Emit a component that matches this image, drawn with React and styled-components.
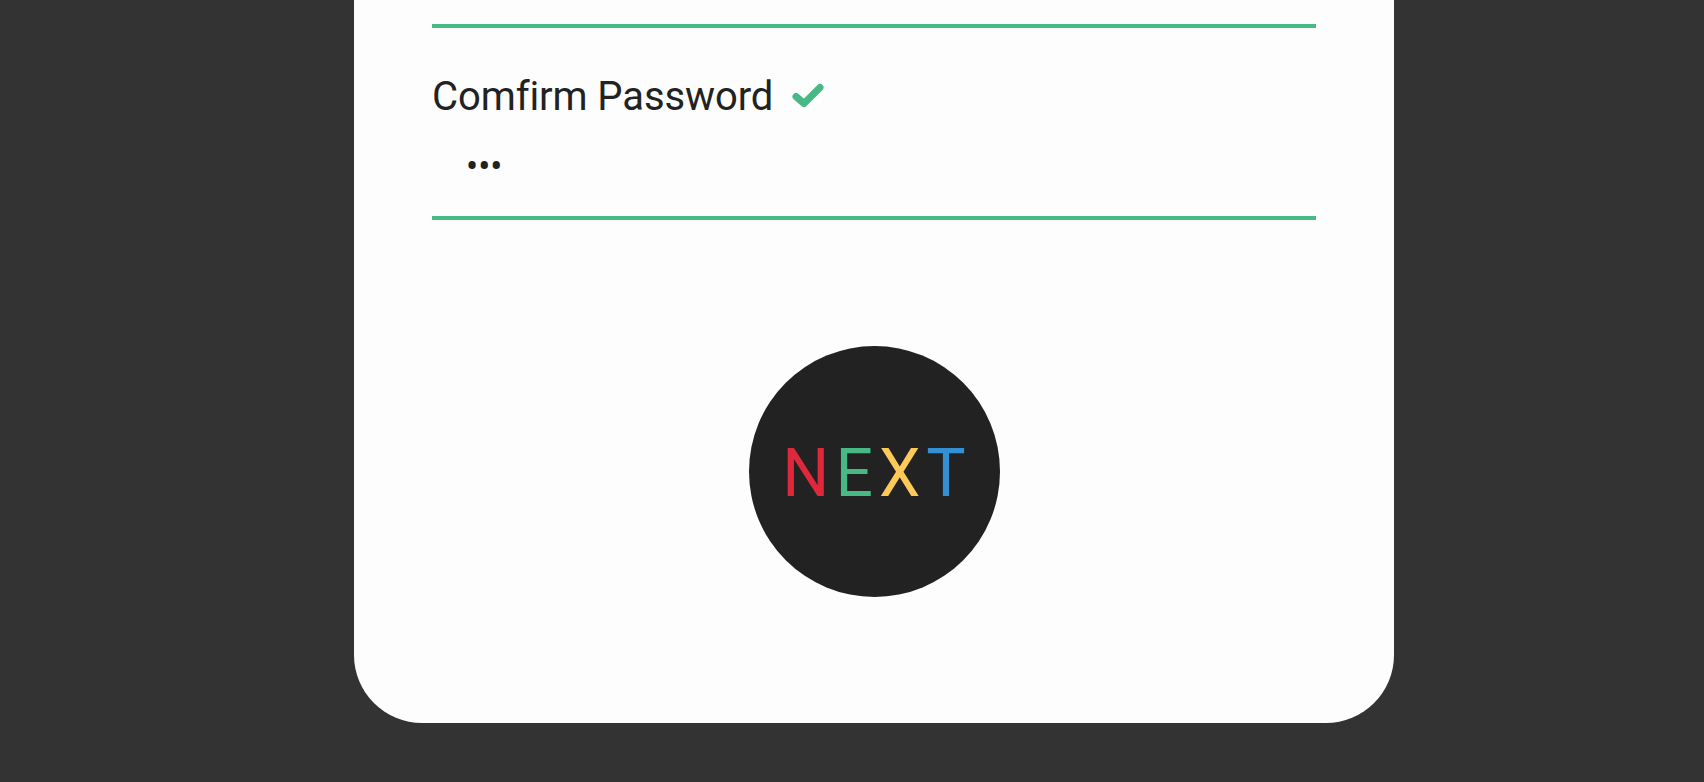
import React from "react";
import styled, { createGlobalStyle } from "styled-components";

const GlobalStyle = createGlobalStyle`
  html, body {
    margin: 0;
    padding: 0;
    background: #333333;
  }
  body {
    font-family: Roboto, "Liberation Sans", sans-serif;
  }
`;

const Page = styled.div`
  min-height: 782px;
  padding-left: 354px;
  box-sizing: border-box;
`;

const Card = styled.div`
  width: 1040px;
  height: 723px;
  box-sizing: border-box;
  background: #fdfdfd;
  border-radius: 0 0 68px 68px;
  padding: 24px 78px 0;
  display: flex;
  flex-direction: column;
`;

const Divider = styled.div`
  height: 4px;
  flex-shrink: 0;
  background: #48b884;
`;

const Field = styled.div`
  display: flex;
  flex-direction: column;
  padding-top: 45px;
`;

const Label = styled.label`
  display: flex;
  align-items: center;
  font-size: 40px;
  line-height: 47px;
  color: #222222;
  letter-spacing: -0.1px;
`;

const Check = styled.svg`
  width: 40px;
  height: 30px;
  margin-left: 12px;
  overflow: visible;
`;

const PasswordInput = styled.input`
  border: none;
  outline: none;
  background: transparent;
  font-family: Roboto, "Liberation Sans", sans-serif;
  font-size: 36px;
  color: #222222;
  padding: 0 0 0 34px;
  margin: 22px 0 24px;
  height: 50px;
  width: 100%;
  box-sizing: border-box;
`;

const ButtonArea = styled.div`
  display: flex;
  justify-content: center;
  padding-top: 126px;
`;

const NextButton = styled.button`
  width: 251px;
  height: 251px;
  border-radius: 50%;
  border: none;
  background: #222222;
  display: flex;
  align-items: center;
  justify-content: center;
  font-family: Roboto, "Liberation Sans", sans-serif;
  font-size: 66px;
  letter-spacing: 6px;
  padding: 3px 0 0 6px;
  cursor: pointer;
`;

const Letter = styled.span`
  color: ${(p) => p.$color};
`;

const letters = [
  { ch: "N", color: "#e0283c" },
  { ch: "E", color: "#48b884" },
  { ch: "X", color: "#fdca5a" },
  { ch: "T", color: "#3490d4" },
];

export default function App() {
  return (
    <>
      <GlobalStyle />
      <Page>
        <Card>
          <Divider />
          <Field>
            <Label>
              Comfirm Password
              <Check viewBox="0 0 40 30">
                <polyline
                  points="11,14.5 19,21.5 35,5.5"
                  fill="none"
                  stroke="#48b884"
                  strokeWidth="7"
                  strokeLinecap="round"
                  strokeLinejoin="round"
                />
              </Check>
            </Label>
            <PasswordInput type="password" defaultValue="abc" readOnly />
          </Field>
          <Divider />
          <ButtonArea>
            <NextButton>
              {letters.map((l) => (
                <Letter key={l.ch} $color={l.color}>
                  {l.ch}
                </Letter>
              ))}
            </NextButton>
          </ButtonArea>
        </Card>
      </Page>
    </>
  );
}
